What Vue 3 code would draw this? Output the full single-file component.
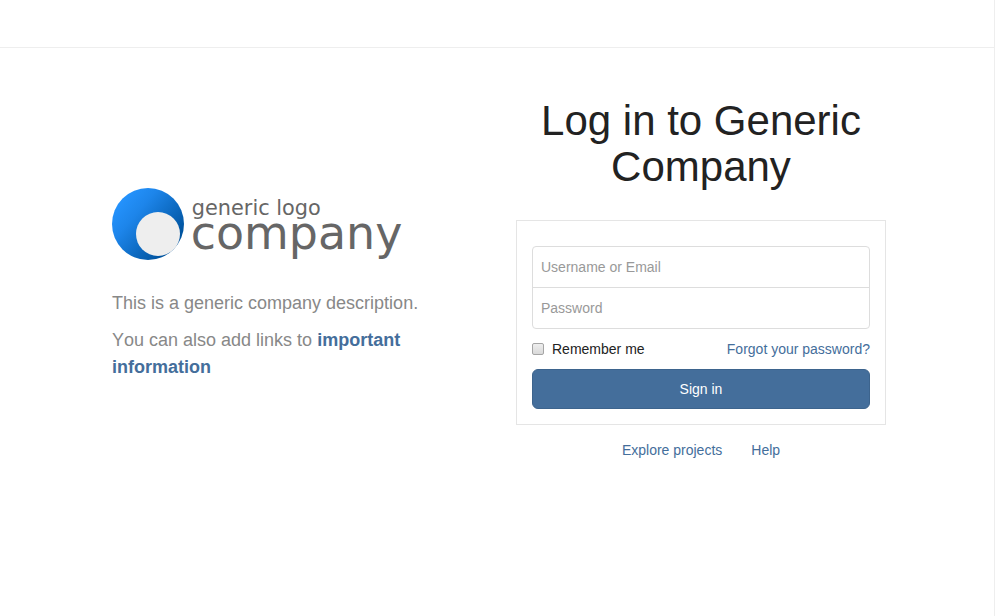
<script setup>
import { ref } from 'vue'

const login = ref('')
const password = ref('')
const remember = ref(false)
</script>

<template>
  <div class="page">
    <header class="navbar"></header>
    <main class="content">
      <section class="brand">
        <svg class="logo" viewBox="0 0 292 74" width="292" height="74" role="img" aria-label="generic logo company">
          <defs>
            <linearGradient id="disc" x1="0.15" y1="0.15" x2="0.85" y2="0.75">
              <stop offset="0" stop-color="#2492fc" />
              <stop offset="0.3" stop-color="#1d85ea" />
              <stop offset="1" stop-color="#0054a0" />
            </linearGradient>
          </defs>
          <circle cx="36" cy="36" r="36" fill="url(#disc)" />
          <circle cx="46" cy="46" r="22" fill="#eeeeee" />
          <text class="logo-small" x="79.8" y="26.7" textLength="129" lengthAdjust="spacingAndGlyphs">generic logo</text>
          <text class="logo-large" x="78.8" y="61.2" textLength="211.5" lengthAdjust="spacingAndGlyphs">company</text>
        </svg>
        <p>This is a generic company description.</p>
        <p>You can also add links to <a href="#">important information</a></p>
      </section>
      <section class="login">
        <h1>Log in to Generic Company</h1>
        <form class="box" @submit.prevent>
          <div class="fields">
            <input v-model="login" type="text" placeholder="Username or Email" />
            <input v-model="password" type="password" placeholder="Password" />
          </div>
          <div class="options">
            <label><input v-model="remember" type="checkbox" />Remember me</label>
            <a href="#">Forgot your password?</a>
          </div>
          <button type="submit">Sign in</button>
        </form>
        <nav class="links">
          <a href="#">Explore projects</a>
          <a href="#">Help</a>
        </nav>
      </section>
    </main>
  </div>
</template>

<style>
body {
  margin: 0;
  background: #fff;
}
</style>

<style scoped>
* {
  box-sizing: border-box;
}
.page {
  height: 616px;
  border-right: 1px solid #eee;
  font: 14px/20px "Liberation Sans", Arial, sans-serif;
  color: #222;
}
.navbar {
  height: 48px;
  border-bottom: 1px solid #eee;
}
.content {
  display: grid;
  grid-template-columns: 340px 370px;
  column-gap: 64px;
  padding-left: 112px;
}
a {
  color: #446e9b;
  text-decoration: none;
}
.brand {
  padding-top: 140px;
  font-size: 18px;
  line-height: 27px;
  font-kerning: none;
  color: #888;
}
.logo {
  display: block;
  margin-bottom: 28px;
  overflow: visible;
}
.logo text {
  font-family: "DejaVu Sans", sans-serif;
  fill: #666;
}
.logo-small {
  font-size: 21px;
}
.logo-large {
  font-size: 47px;
}
.brand p {
  margin: 0 0 10px;
}
.brand a {
  font-weight: bold;
}
.login {
  padding-top: 50px;
}
h1 {
  margin: 0 0 30px;
  font-size: 42px;
  font-weight: normal;
  line-height: 46px;
  text-align: center;
}
.box {
  height: 205px;
  padding: 25px 15px 15px;
  border: 1px solid #e5e5e5;
}
.fields {
  height: 83px;
  border: 1px solid #ddd;
  border-radius: 4px;
}
.fields input {
  display: block;
  width: 100%;
  height: 40px;
  padding: 0 8px;
  border: 0;
  outline: 0;
  background: transparent;
  font: inherit;
}
.fields input + input {
  height: 41px;
  border-top: 1px solid #ddd;
}
.fields input::placeholder {
  color: #999;
  opacity: 1;
}
.options {
  display: flex;
  justify-content: space-between;
  margin: 10px 0;
}
.options label {
  display: flex;
  align-items: center;
}
.options input {
  appearance: none;
  width: 12px;
  height: 12px;
  margin: 0 8px 0 0;
  border: 1px solid #a5a5a5;
  border-radius: 2px;
  background: linear-gradient(#eee, #d9d9d9);
}
button {
  display: block;
  width: 100%;
  height: 40px;
  padding: 0;
  border: 1px solid #3d648d;
  border-radius: 6px;
  background: #446e9b;
  color: #fff;
  font: inherit;
}
.links {
  display: flex;
  justify-content: center;
  gap: 29px;
  padding-top: 15px;
}
</style>
